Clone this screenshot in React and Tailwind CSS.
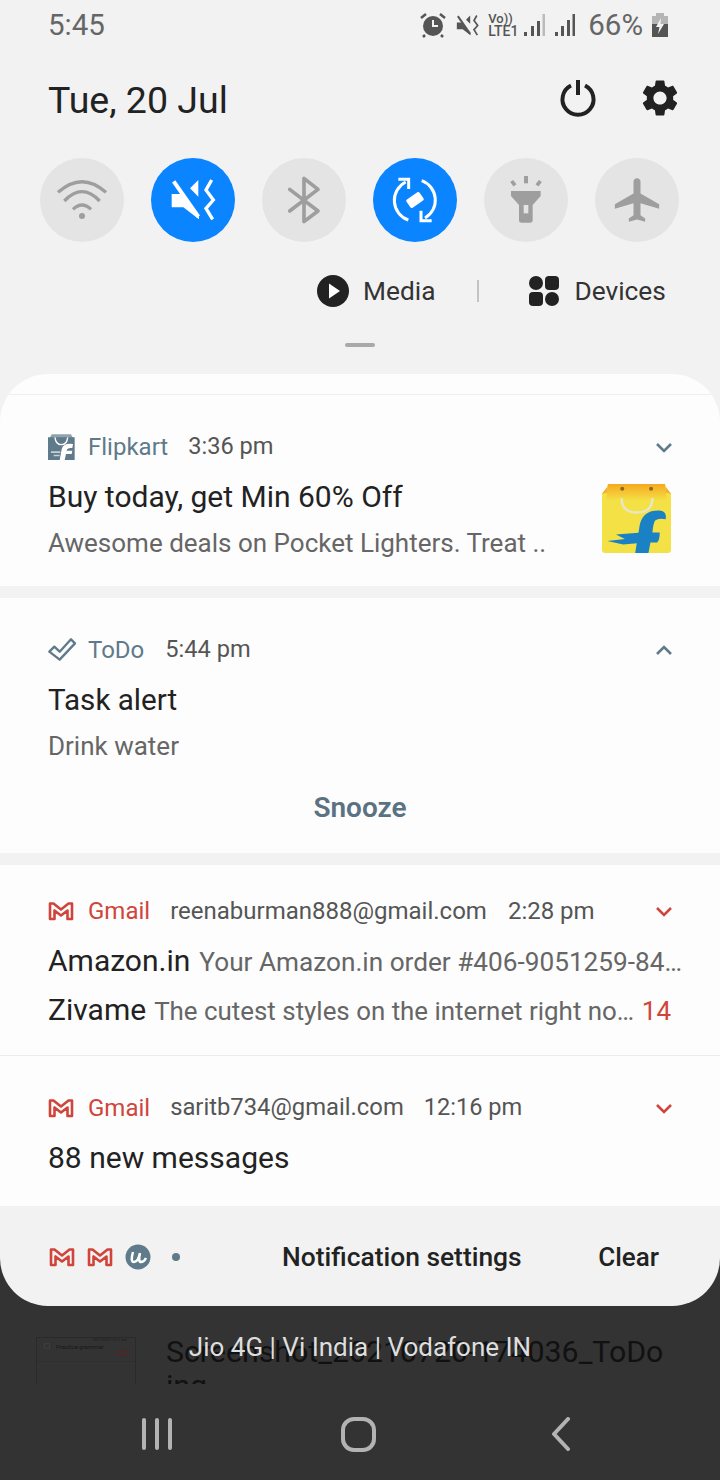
import React from 'react';

const GRAY = '#9e9e9e';
const SLATE = '#5f7a8a';
const RED = '#d0453b';

const Tile = ({ active, children }) => (
  <div className={`flex h-[84px] w-[84px] items-center justify-center rounded-full ${active ? 'bg-[#0a84ff]' : 'bg-[#e4e4e4]'}`}>
    <svg width="50" height="50" viewBox="-75 -75 150 150">{children}</svg>
  </div>
);

// speaker with slash and vibration wave, used by the tile and the status bar
const MuteVibrate = ({ color }) => (
  <>
    <path d="M16,-60 V-10 L-9,-35 Z" fill={color} />
    <path d="M-58,-56 L16,50" stroke={color} strokeWidth="12" />
    <path d="M-64,-18 H-36 L18,50 V58 L-29,22 H-64 Z" fill={color} />
    <path d="M56,-60 L39,-30 L61,0 L39,25 L59,58" fill="none" stroke={color} strokeWidth="10" />
  </>
);

const GmailIcon = ({ className }) => (
  <svg className={className} width="26" height="20" viewBox="0 0 26 20" fill="none" stroke={RED} strokeWidth="2.6" strokeLinejoin="round">
    <path d="M2 2.500h3.500L13 8.500l7.500-6H24V18h-4.500V9.500L13 14.500 6.500 9.500V18H2z" />
  </svg>
);

const Chevron = ({ up, color }) => (
  <svg className={up ? '' : 'mt-[3px]'} width="18" height="12" viewBox="0 0 18 12" fill="none" stroke={color} strokeWidth="2.6">
    <path d={up ? 'M2 10l7-7 7 7' : 'M2 2l7 7 7-7'} />
  </svg>
);

const NotifHeader = ({ icon, app, appClass, children, chevron }) => (
  <div className="flex h-[32px] items-center pl-[48px] pr-[47px] pt-[1px] text-[24px] text-[#555]">
    <div className="flex w-[40px] shrink-0 items-center">{icon}</div>
    <span className={appClass}>{app}</span>
    {children}
    <div className="ml-auto">{chevron}</div>
  </div>
);

export default function App() {
  return (
    <div className="flex h-[1480px] w-[720px] flex-col overflow-hidden bg-[#333333] font-['Roboto',sans-serif]">
      {/* quick panel */}
      <div className="h-[422px] shrink-0 bg-[#f2f2f2]">
        <div className="flex h-[50px] items-center pl-[48px] pr-[52px] text-[#666]">
          <span className="text-[29.5px]">5:45</span>
          <div className="ml-auto flex items-center">
            <svg width="26" height="26" viewBox="0 0 26 26" fill="#555">
              <circle cx="13" cy="14" r="10" />
              <path d="M13 8v6h5" fill="none" stroke="#f2f2f2" strokeWidth="2" />
              <path d="M1 6l5-4M25 6l-5-4M5 23l-2 2M21 23l2 2" stroke="#555" strokeWidth="2.500" />
            </svg>
            <svg className="ml-[9px]" width="25" height="25" viewBox="-75 -75 150 150">
              <MuteVibrate color="#555" />
            </svg>
            <div className="ml-[8px] flex w-[30px] flex-col font-medium leading-[12px] text-[#555]">
              <span className="text-[13px]">Vo))</span>
              <span className="text-[14px]">LTE1</span>
            </div>
            <svg className="ml-[5px]" width="22" height="24" viewBox="0 0 22 24">
              <path d="M1 19h3v4H1zM8 13h3v10H8zM14 8h3v15h-3z" fill="#555" />
              <path d="M19.500 1h2.500v22h-2.500z" fill="#bbb" />
            </svg>
            <svg className="ml-[9px]" width="21" height="24" viewBox="0 0 21 24" fill="#555">
              <path d="M1 19h3v4H1zM7 13h3v10H7zM13 7h3v16h-3zM18.500 1h2.500v22h-2.500z" />
            </svg>
            <span className="ml-[13px] text-[29.5px]">66%</span>
            <svg className="ml-[9px]" width="16" height="24" viewBox="0 0 16 24">
              <path d="M4 0h8v3h4v8H0V3h4z" fill="#b5b5b5" />
              <path d="M0 11h16v13H0z" fill="#555" />
              <path d="M9 5L4 14h3.500L6 21l6-10H8.500z" fill="#f2f2f2" />
            </svg>
          </div>
        </div>

        <div className="mt-[25px] flex h-[50px] items-center pl-[48px] pr-[38px] text-[#222]">
          <span className="mt-[1px] text-[37.5px]">Tue, 20 Jul</span>
          <svg className="ml-auto -mt-[4px]" width="38" height="38" viewBox="0 0 38 38" fill="none" stroke="#222" strokeWidth="4">
            <path d="M12 6.500A15.500 15.500 0 1 0 26 6.500" />
            <path d="M19 1v15" />
          </svg>
          <svg className="ml-[41px] -mt-[4px]" width="44" height="44" viewBox="0 0 24 24" fill="#222">
            <path d="M19.140 12.940c.04-.3.06-.61.06-.94 0-.32-.02-.64-.07-.94l2.030-1.580c.18-.14.23-.41.12-.61l-1.920-3.320c-.12-.22-.37-.29-.59-.22l-2.390.96c-.5-.38-1.030-.7-1.620-.94l-.36-2.540c-.04-.24-.24-.41-.48-.41h-3.840c-.24 0-.43.17-.47.41l-.36 2.540c-.59.24-1.130.57-1.620.94l-2.390-.96c-.22-.08-.47 0-.59.22L2.740 8.870c-.12.21-.08.47.12.61l2.030 1.580c-.05.3-.09.63-.09.94s.02.64.07.94l-2.030 1.580c-.18.14-.23.41-.12.61l1.920 3.320c.12.22.37.29.59.22l2.390-.96c.5.38 1.030.7 1.620.94l.36 2.540c.05.24.24.41.48.41h3.840c.24 0 .44-.17.47-.41l.36-2.540c.59-.24 1.130-.56 1.620-.94l2.390.96c.22.08.47 0 .59-.22l1.920-3.320c.12-.22.07-.47-.12-.61l-2.010-1.580zM12 15.600c-1.980 0-3.600-1.620-3.600-3.600s1.620-3.600 3.600-3.600 3.600 1.620 3.600 3.600-1.620 3.600-3.600 3.600z" />
          </svg>
        </div>

        <div className="mt-[33px] flex gap-[27px] pl-[40px]">
          <Tile>
            <g fill="none" stroke={GRAY} strokeWidth="10">
              <path d="M-72,-23 Q0,-87 72,-23" />
              <path d="M-53,3 Q0,-53 53,3" />
              <path d="M-27,28 Q0,2 27,28" />
            </g>
            <circle cx="0" cy="48" r="9" fill={GRAY} />
          </Tile>
          <Tile active>
            <MuteVibrate color="#fff" />
          </Tile>
          <Tile>
            <path d="M-43,-32 L42,33 L0,65 V-65 L42,-32 L-43,33" fill="none" stroke={GRAY} strokeWidth="11" strokeLinecap="round" strokeLinejoin="round" />
          </Tile>
          <Tile active>
            <g fill="none" stroke="#fff" strokeWidth="9">
              <path d="M-28,-54 A62,62 0 0 0 -20,60" />
              <path d="M-50,-62 H-19 V-33" />
              <path d="M20,-58 A62,62 0 0 1 30,54" />
              <path d="M50,62 H18 V32" />
            </g>
            <rect x="-24" y="-15" width="48" height="30" rx="5" fill="#fff" transform="rotate(-35)" />
          </Tile>
          <Tile>
            <path d="M-6,-72 H6 V-50 H-6 Z" fill={GRAY} />
            <path d="M-43,-57 L-33,-44 M43,-57 L33,-44" stroke={GRAY} strokeWidth="11" />
            <path d="M-45,-27 H44 V-12 L20,15 V60 Q20,68 12,68 H-13 Q-21,68 -21,60 V15 L-45,-12 Z" fill={GRAY} />
            <rect x="-7" y="15" width="14" height="25" fill="#e4e4e4" />
          </Tile>
          <Tile>
            <path transform="scale(7,6.500) translate(-11.500,-12)" fill={GRAY} d="M21 16v-2l-8-5V3.500c0-.83-.67-1.500-1.500-1.500S10 2.670 10 3.500V9l-8 5v2l8-2.500V19l-2 1.500V22l3.500-1 3.500 1v-1.500L13 19v-5.500l8 2.500z" />
          </Tile>
        </div>

        <div className="mt-[29px] flex h-[40px] items-center pl-[316px] text-[26.3px] text-[#333]">
          <svg width="34" height="34" viewBox="0 0 34 34">
            <circle cx="17" cy="17" r="16" fill="#222" />
            <path d="M13 9.500l11 7.500-11 7.500z" fill="#fff" />
          </svg>
          <span className="ml-[13px] mt-[1px]">Media</span>
          <div className="ml-[42px] h-[22px] w-[2px] bg-[#c4c4c4]" />
          <div className="ml-[50px] grid grid-cols-2 gap-[2px]">
            <div className="h-[14px] w-[14px] rounded-full bg-[#222]" />
            <div className="h-[14px] w-[14px] rounded-[4px] bg-[#222]" />
            <div className="h-[14px] w-[14px] rounded-[4px] bg-[#222]" />
            <div className="h-[14px] w-[14px] rounded-full bg-[#222]" />
          </div>
          <span className="ml-[15px] mt-[1px]">Devices</span>
        </div>

        <div className="mx-auto mt-[32px] h-[4px] w-[30px] rounded-full bg-[#a9a9a9]" />
      </div>

      {/* notification sheet */}
      <div className="-mt-[48px] flex h-[932px] shrink-0 flex-col overflow-hidden rounded-[48px] bg-[#f2f2f2]">
        <div className="h-[212px] shrink-0 bg-[#fdfdfd] pt-[20px]">
          <div className="h-px bg-[#efefef]" />
          <div className="mt-[35px]">
            <NotifHeader
              app="Flipkart"
              appClass="text-[#5f7a8a]"
              icon={
                <svg width="27" height="27" viewBox="57 33 81 81">
                  <path d="M62 48 L68 37 H126 L132 48 Z" fill="#8fa2ae" />
                  <path d="M57 46 H137 V114 H57 Z" fill={SLATE} />
                  <path d="M78 46 Q80 68 97 68 Q114 68 116 46" fill="none" stroke="#fff" strokeWidth="4" />
                  <path d="M92 114 L98 82 Q102 62 132 66 L130 78 Q114 76 113 86 H130 L128 96 H111 L107 114 Z" fill="#fff" />
                  <path d="M66 88 H94 V93 H66 Z M74 98 H92 V103 H74 Z" fill="#c5d0d8" />
                </svg>
              }
              chevron={<Chevron color={SLATE} />}
            >
              <span className="ml-[20px] text-[23.6px]">3:36 pm</span>
            </NotifHeader>
          </div>
          <div className="flex pl-[48px] pr-[47px]">
            <div className="flex min-w-0 flex-col">
              <span className="mt-[17px] text-[30px] leading-[36px] text-[#222]">Buy today, get Min 60% Off</span>
              <span className="mt-[10px] whitespace-nowrap text-[26px] leading-[36px] text-[#666]">Awesome deals on Pocket Lighters. Treat ..</span>
            </div>
            <svg className="ml-auto mt-[20px] shrink-0" width="73" height="72" viewBox="60 185 220 215">
              <defs>
                <linearGradient id="bagTop" x1="0" y1="0" x2="0" y2="1">
                  <stop offset="0" stopColor="#f6a821" />
                  <stop offset="1" stopColor="#f4e145" />
                </linearGradient>
              </defs>
              <path d="M66 218 L82 200 L84 190 H256 L258 200 L274 218 L274 388 Q274 398 264 398 H76 Q66 398 66 388 Z" fill="#f4e145" />
              <path d="M84 190 H256 L262 240 H78 Z" fill="url(#bagTop)" />
              <path d="M66 220 L82 198 V216 Z M274 220 L258 198 V216 Z" fill="#f0b03a" />
              <circle cx="127" cy="204" r="6" fill="#8a6a20" />
              <circle cx="214" cy="204" r="6" fill="#8a6a20" />
              <path d="M125 232 Q125 276 170 276 Q218 276 218 232" fill="none" stroke="#e8e6c8" strokeWidth="7" />
              <path d="M166 398 L180 312 Q190 268 240 270 Q262 272 258 296 Q236 292 226 300 Q220 310 218 336 H240 Q240 360 232 366 H212 L206 398 Z" fill="#1a82c4" />
              <path d="M82 362 L135 356 L108 342 L186 336 L180 368 L130 372 Z" fill="#1a82c4" />
            </svg>
          </div>
        </div>

        <div className="mt-[12px] h-[255px] shrink-0 bg-[#fdfdfd] pt-[35px]">
          <NotifHeader
            app="ToDo"
            appClass="text-[#5f7a8a]"
            icon={
              <svg width="28" height="23" viewBox="53 34 84 69" fill="none" stroke={SLATE} strokeWidth="7" strokeLinejoin="round">
                <path d="M57 75 L72 60 L88 75 L122 38 L134 50 L88 99 Z" />
              </svg>
            }
            chevron={<Chevron up color={SLATE} />}
          >
            <span className="ml-[21px] text-[23.6px]">5:44 pm</span>
          </NotifHeader>
          <div className="mt-[17px] pl-[48px] text-[29.6px] leading-[36px] text-[#222]">Task alert</div>
          <div className="mt-[10px] pl-[48px] text-[26px] leading-[36px] text-[#666]">Drink water</div>
          <div className="mt-[26px] text-center text-[28px] font-semibold leading-[36px] text-[#5b7282]">Snooze</div>
        </div>

        <div className="mt-[12px] h-[190px] shrink-0 bg-[#fdfdfd] pt-[29px]">
          <NotifHeader
            app="Gmail"
            appClass="text-[#d0453b]"
            icon={<GmailIcon />}
            chevron={<Chevron color={RED} />}
          >
            <span className="ml-[20px]">reenaburman888@gmail.com</span>
            <span className="ml-[21px]">2:28 pm</span>
          </NotifHeader>
          <div className="mt-[12px] flex h-[36px] items-baseline whitespace-nowrap pl-[48px]">
            <span className="text-[30px] text-[#222]">Amazon.in</span>
            <span className="ml-[9px] text-[26.2px] text-[#666]">Your Amazon.in order #406-9051259-84…</span>
          </div>
          <div className="mt-[13px] flex h-[36px] items-baseline whitespace-nowrap pl-[48px] pr-[49px]">
            <span className="text-[30px] text-[#222]">Zivame</span>
            <span className="ml-[8px] text-[25.9px] text-[#666]">The cutest styles on the internet right no…</span>
            <span className="ml-auto text-[26px] text-[#d0453b]">14</span>
          </div>
        </div>

        <div className="h-[151px] shrink-0 border-t border-[#ebebeb] bg-[#fdfdfd] pt-[35px]">
          <NotifHeader
            app="Gmail"
            appClass="text-[#d0453b]"
            icon={<GmailIcon />}
            chevron={<Chevron color={RED} />}
          >
            <span className="ml-[20px] text-[23.8px]">saritb734@gmail.com</span>
            <span className="ml-[20px] text-[23.6px]">12:16 pm</span>
          </NotifHeader>
          <div className="mt-[17px] pl-[48px] text-[30px] leading-[36px] text-[#222]">88 new messages</div>
        </div>

        <div className="flex min-h-0 flex-1 items-center pl-[49px] pr-[61px] pt-[2px]">
          <GmailIcon />
          <GmailIcon className="ml-[12px]" />
          <svg className="ml-[12px]" width="26" height="26" viewBox="0 0 26 26">
            <circle cx="13" cy="13" r="12.500" fill={SLATE} />
            <path d="M8 8 Q5 18 9 18 Q13 18 15 9 Q13 18 16 18 Q19 18 21 14" fill="none" stroke="#fff" strokeWidth="2.500" />
          </svg>
          <div className="ml-[21px] h-[8px] w-[8px] rounded-full bg-[#5f7a8a]" />
          <span className="ml-[102px] mt-[1px] text-[26.4px] font-medium text-[#222]">Notification settings</span>
          <span className="ml-auto text-[26px] font-medium text-[#222]">Clear</span>
        </div>
      </div>

      {/* what lies behind the panel */}
      <div className="relative flex h-[78px] shrink-0 overflow-hidden pl-[36px] pt-[29px]">
        <div className="relative mt-[2px] h-[60px] w-[100px] shrink-0 border border-[#2a2a2a]">
          <span className="absolute right-[8px] -top-[1px] whitespace-nowrap text-[4px] text-[#1c1c1c]">20/7/2021 5:11 am</span>
          <div className="absolute left-[7px] top-[5px] h-[6px] w-[6px] rounded-[1px] border border-[#3c4030]" />
          <span className="absolute left-[19px] top-[4px] whitespace-nowrap text-[6px] text-[#181818]">Practice grammar</span>
          <div className="absolute right-[6px] top-[12px] h-[6px] w-[12px] rounded-full border border-[#5a2020]" />
          <div className="absolute inset-x-0 top-[23px] h-px bg-[#2e2e2e]" />
        </div>
        <div className="ml-[30px] whitespace-nowrap text-[30.3px] leading-[34px] text-[#111]">
          Screenshot_20210720-174036_ToDo
          <br />
          ing
        </div>
        <span className="absolute inset-x-0 top-[24px] text-center text-[26px] leading-[34px] text-[#dedede]">Jio 4G | Vi India | Vodafone IN</span>
      </div>

      {/* nav bar */}
      <div className="flex flex-1 items-center bg-[#333333] pt-[4px]">
        <div className="ml-[142px] flex gap-[9px]">
          <div className="h-[32px] w-[4px] rounded-full bg-[#b3b3b3]" />
          <div className="h-[32px] w-[4px] rounded-full bg-[#b3b3b3]" />
          <div className="h-[32px] w-[4px] rounded-full bg-[#b3b3b3]" />
        </div>
        <div className="ml-[169px] h-[35px] w-[35px] rounded-[13px] border-[4px] border-[#b3b3b3]" />
        <svg className="ml-[175px]" width="20" height="34" viewBox="0 0 20 34" fill="none" stroke="#b3b3b3" strokeWidth="4" strokeLinecap="round" strokeLinejoin="round">
          <path d="M17 2L3 17l14 15" />
        </svg>
      </div>
    </div>
  );
}
